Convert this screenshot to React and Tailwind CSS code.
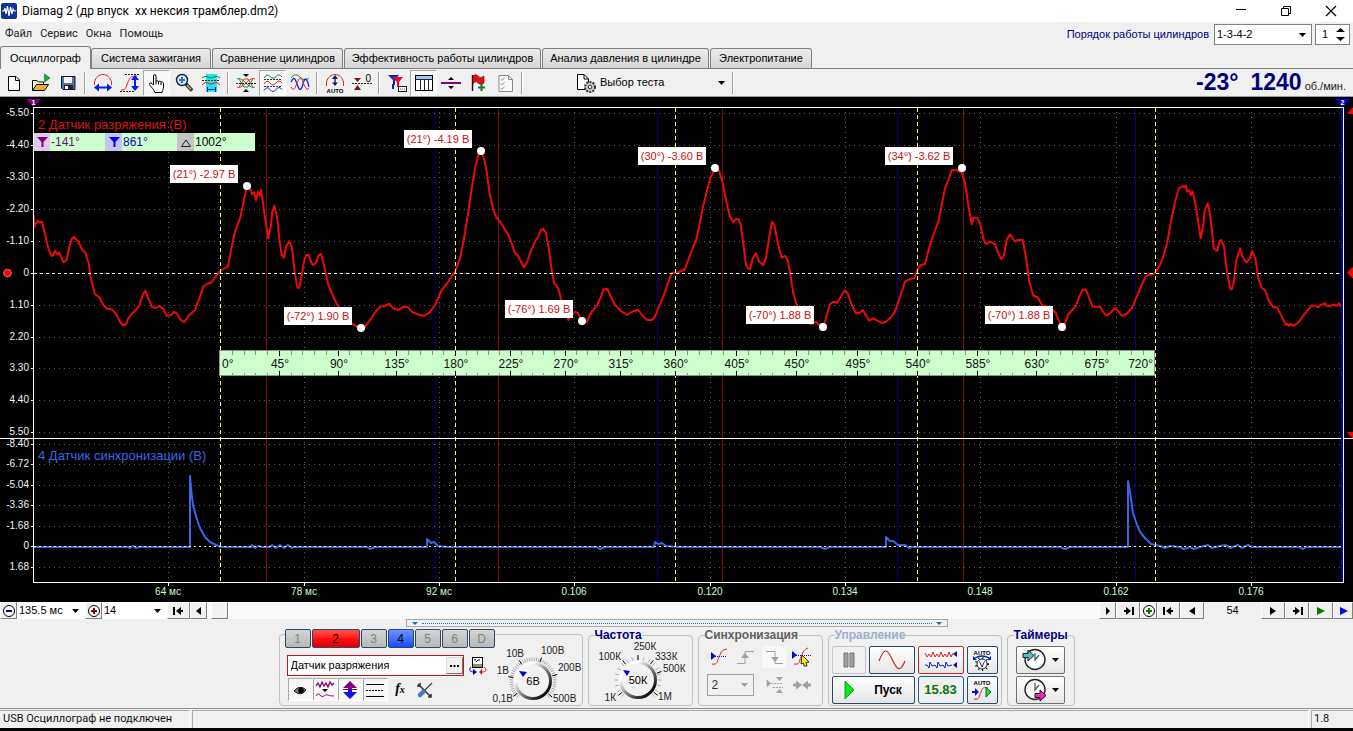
import React from "react";

const FONT = "font-['Liberation_Sans',Arial,sans-serif]";
const UI_FONT = "font-['Roboto','Noto_Sans',sans-serif]";

/* ---------- chart data: pixel traces of both channels ---------- */
const seg = (x0, y0, pts) => pts.map(([x, y]) => [x0 + x / 3, y0 + y / 3]);

const VACUUM = [
  ...seg(0, 95, [[101,360],[103,395],[112,378],[120,382],[126,380],[134,415],[145,460],[155,483],[160,480],[165,468],[172,478],[178,472],[190,502],[200,495],[208,455],[215,432],[222,426],[235,440],[248,467],[255,470],[266,505],[272,550],[285,598],[298,607],[310,630],[322,642],[336,643],[350,660],[360,680],[368,691],[378,688],[385,670],[397,655],[405,648],[418,632],[428,600],[436,587],[445,610],[457,637],[470,638],[478,632],[490,642],[500,662],[512,660],[522,651],[530,655],[540,672],[552,682],[565,663],[585,645],[600,605],[610,575],[622,566],[635,562],[655,533],[665,525],[684,514],[695,455],[705,410],[720,370],[730,325],[738,285],[742,278],[752,285],[756,298],[762,292],[768,316],[774,290],[780,302],[783,285],[790,330],[796,375],[805,430],[813,390],[817,350],[823,332],[832,370],[838,430],[845,480],[852,488],[858,455],[868,438],[876,460],[884,530],[892,578],[898,578],[905,540],[912,500],[918,480],[926,480],[935,505],[940,510],[950,500],[956,480],[963,477],[972,510],[985,570],[1000,605],[1015,635]]),
  ...seg(350, 95, [[-20,660],[-5,680],[8,687],[20,695],[33,700],[45,695],[60,675],[80,645],[90,635],[105,633],[118,626],[130,640],[145,645],[158,637],[172,635],[185,650],[200,657],[222,663],[238,653],[255,630],[275,585],[290,567],[316,528],[330,490],[342,430],[352,370],[362,300],[375,220],[385,180],[393,170],[402,190],[410,230],[418,290],[430,345],[438,365],[446,375],[460,395],[475,420],[487,450],[495,475],[503,480],[515,505],[522,517],[532,500],[540,475],[552,445],[565,425],[573,405],[580,402],[588,415],[596,460],[605,525],[613,565],[625,580],[633,612],[642,640],[655,675],[665,660],[675,650],[685,655],[696,678],[710,680],[725,650],[740,632],[753,605],[760,583],[772,582],[780,600],[795,630],[815,650],[832,660],[850,648],[865,645],[880,665],[892,675],[905,675],[915,665],[925,640],[940,605],[955,560],[965,535],[985,532],[1005,522],[1020,480],[1040,430],[1049,385]]),
  ...seg(700, 95, [[2,370],[8,340],[20,290],[32,245],[45,225],[58,228],[68,265],[80,325],[90,365],[100,382],[108,372],[116,373],[122,390],[130,445],[138,510],[144,519],[150,522],[158,490],[168,475],[178,500],[190,510],[198,488],[207,430],[216,380],[223,390],[235,450],[245,488],[255,483],[263,495],[272,545],[280,595],[292,635],[310,665],[332,688],[348,680],[358,690],[368,697],[378,670],[390,628],[400,620],[412,623],[425,600],[435,586],[443,595],[455,630],[468,655],[480,653],[488,645],[508,677],[520,670],[545,684],[558,680],[570,670],[585,650],[600,605],[615,560],[630,552],[642,550],[655,520],[662,510],[675,507],[690,450],[700,420],[715,380],[725,330],[735,280],[748,248],[755,225],[770,226],[785,232],[795,265],[805,330],[815,388],[820,368],[832,368],[840,385],[850,430],[857,447],[862,445],[870,440],[885,447],[893,470],[904,492],[912,480],[920,435],[930,418],[945,440],[955,435],[968,435],[978,490],[988,560],[1000,602],[1013,607],[1026,630]]),
  ...seg(1000, 95, [[155,640],[168,655],[178,680],[186,692],[195,685],[205,658],[228,633],[240,600],[250,583],[258,585],[268,610],[278,635],[300,635],[310,650],[318,662],[330,655],[344,640],[352,645],[365,662],[380,656],[395,640],[410,605],[425,570],[438,542],[462,538],[480,510],[490,485],[502,440],[512,385],[525,320],[537,280],[547,273],[553,278],[558,272],[562,290],[568,286],[572,300],[578,290],[585,320],[593,370],[602,430],[610,390],[614,345],[623,325],[628,345],[635,400],[641,460],[652,468],[658,440],[663,435],[672,455],[680,525],[690,580],[695,583],[702,560],[708,500],[720,460],[730,490],[740,502],[750,490],[756,468],[766,490],[775,550],[785,578],[795,585],[808,620],[820,637],[832,637],[845,665],[858,690],[863,686],[868,693],[873,686],[878,692],[885,690],[897,680],[915,655],[935,632],[945,632],[955,637],[962,630],[975,625],[980,632],[990,634],[1000,628],[1010,632],[1018,625],[1025,640]]),
];

const SYNC = [
  [34,547],[128,547],[130,548],[133,546],[136,548],[139,547],[190,547],[190,476],[191.5,493],[193,505],[196.5,518],[200,528],[205,537],[210,542],[217,545.5],[222,547],
  [251,547],[252,545],[255,548],[258,546],[262,547],[270,547],[272,545],[276,548],[280,545],[284,548],[288,545],[292,548],[293,547],
  [367,547],[370,549],[375,547],[427,547],[427,539],[431,543],[434,542],[438,546],[446,547],[597,547],[600,549],[605,547],[654,547],[655,542],[658,544],[662,543],[666,546],[680,547],[821,547],[825,549],[829,547],
  [886,547],[886,537],[890,541],[893,541],[898,545],[905,545],[909,548],[912,547],[1060,547],[1065,549],[1070,547],[1128,547],[1128,481],[1130,492],[1133,513],[1136,522],[1140,532],[1145,538],[1151,544],[1160,546],[1165,548],[1170,546],[1180,547],[1184,549],[1190,547],[1194,549],[1200,547],[1208,545],[1212,548],[1220,546],[1226,545],[1230,548],[1238,545],[1242,548],[1248,545],[1252,547],[1299,547],[1303,549],[1306,547],[1342,547],
];

const toPoints = (a) => a.map(([x, y]) => `${x.toFixed(1)},${y.toFixed(1)}`).join(" ");

const Y_TOP = [["-5.50",113],["-4.40",145],["-3.30",177],["-2.20",209],["-1.10",241],["0",273],["1.10",305],["2.20",337],["3.30",368],["4.40",400],["5.50",432]];
const Y_BOTTOM = [["-8.40",444],["-6.72",464],["-5.04",485],["-3.36",505],["-1.68",526],["0",546],["1.68",567]];
const X_AXIS = [["64 мс",168],["78 мс",304],["92 мс",439],["0.106",574],["0.120",710],["0.134",845],["0.148",980],["0.162",1116],["0.176",1251]];
const STROKES = [220, 455, 675, 917, 1155];
const MARKS = [
  ["(21°) -2.97 В",170,165,247,186],["(21°) -4.19 В",404,130,481,151],["(30°) -3.60 В",638,147,715,168],["(34°) -3.62 В",885,147,962,168],
  ["(-72°) 1.90 В",284,307,361,328],["(-76°) 1.69 В",505,300,582,321],["(-70°) 1.88 В",746,306,823,327],["(-70°) 1.88 В",985,306,1062,327],
];

const degTicks = [];
for (let i = 0; i <= 80; i++) {
  const s = Math.min(3, Math.floor(i / 20));
  const x = Math.round(STROKES[s] + ((STROKES[s + 1] - STROKES[s]) * (i - s * 20)) / 20);
  degTicks.push({ x, major: i % 5 === 0, deg: i * 9 });
}

function Chart() {
  return (
    <svg viewBox="0 97 1353 505" className={`block w-full bg-black ${FONT}`} role="img" aria-label="Осциллограмма">
      <g shapeRendering="crispEdges">
        <g stroke="#5c5c5c" strokeDasharray="1 4">
          {[...Y_TOP, ...Y_BOTTOM].map(([l, y]) => <line key={l + y} x1="39" x2="1342" y1={y + 0.5} y2={y + 0.5} />)}
          {X_AXIS.map(([l, x]) => <line key={l} x1={x + 0.5} x2={x + 0.5} y1="112" y2="582" />)}
        </g>
        {[435, 657, 897, 1135].map((x) => <line key={x} x1={x + 0.5} x2={x + 0.5} y1="108" y2="582" stroke="#000078" />)}
        {[266, 498, 722, 963].map((x) => <line key={x} x1={x + 0.5} x2={x + 0.5} y1="108" y2="582" stroke="#780f0f" />)}
      </g>
      <polyline points={toPoints(VACUUM)} fill="none" stroke="#ee0808" strokeWidth="2" strokeLinejoin="round" />
      <polyline points={toPoints(SYNC)} fill="none" stroke="#3a67e6" strokeWidth="2" strokeLinejoin="round" />
      <g shapeRendering="crispEdges">
        <line x1="34" x2="1342" y1="273.5" y2="273.5" stroke="#fff" strokeDasharray="3 3" />
        <line x1="34" x2="1342" y1="546.5" y2="546.5" stroke="#fff" strokeDasharray="2 3" />
        {STROKES.map((x) => <line key={x} x1={x + 0.5} x2={x + 0.5} y1="108" y2="582" stroke="#ffff55" strokeDasharray="4 3" />)}
        <path d="M34 107.5H1343M0 438.5H1353M33 582.5H1343" stroke="#fff" />
        <path d="M33.5 107V583M1343.5 107V583" stroke="#fff" />
        <path d="M1342 108V582" stroke="#0000b0" strokeWidth="2" />
        {[...Y_TOP, ...Y_BOTTOM].map(([l, y]) => <line key={l + y} x1="31" x2="34" y1={y + 0.5} y2={y + 0.5} stroke="#fff" />)}
        {X_AXIS.map(([l, x]) => <line key={l} x1={x + 0.5} x2={x + 0.5} y1="583" y2="586" stroke="#fff" />)}
      </g>
      <g fill="#f4f4f4" fontSize="10" textAnchor="end">
        {[...Y_TOP, ...Y_BOTTOM].map(([l, y]) => <text key={l + y} x="29" y={y + 3}>{l}</text>)}
      </g>
      <g fill="#ccffcc" fontSize="10" textAnchor="middle">
        {X_AXIS.map(([l, x]) => <text key={l} x={x} y="595">{l}</text>)}
      </g>
      <text x="38" y="129" fontSize="13" fill="#d81414">2 Датчик разряжения (В)</text>
      <text x="38" y="460" fontSize="13" fill="#3a67e6">4 Датчик синхронизации (В)</text>

      {/* cursor read-out */}
      <rect x="34" y="133" width="221" height="18" fill="#ccffcc" />
      <rect x="34" y="133" width="16" height="18" fill="#e2c8e8" />
      <rect x="105" y="133" width="17" height="18" fill="#c4c4fa" />
      <rect x="177" y="133" width="17" height="18" fill="#c4c4c4" />
      <path d="M37 137H48L43.5 142V147H41.5V142Z" fill="#800080" />
      <path d="M109 137H120L115.500 142V147H113.500V142Z" fill="#0000f0" />
      <path d="M181.500 146.500L186 140L190.500 146.500Z" fill="none" stroke="#222" />
      <g fontSize="12">
        <text x="51" y="146" fill="#6a1070">-141°</text>
        <text x="123" y="146" fill="#0808b8">861°</text>
        <text x="195" y="146" fill="#000">1002°</text>
      </g>

      {/* peak markers */}
      {MARKS.map(([t, x, y, cx, cy]) => (
        <g key={t + x}>
          <rect x={x} y={y} width="68" height="18" fill="#fff" />
          <text x={x + 34} y={y + 13} fontSize="11" fill="#c81010" textAnchor="middle">{t}</text>
          <circle cx={cx} cy={cy} r="4" fill="#fff" />
        </g>
      ))}

      {/* crankshaft degree ruler */}
      <rect x="219.500" y="350.500" width="935" height="25" fill="#ccffcc" stroke="#8a948a" shapeRendering="crispEdges" />
      <g shapeRendering="crispEdges">
        {degTicks.filter((t) => t.deg > 0 && t.deg < 720).map((t) => (
          <path key={t.deg} d={t.major ? `M${t.x + 0.5} 351v5M${t.x + 0.5} 371v5` : `M${t.x + 0.5} 351v4M${t.x + 0.5} 373v2`} stroke={t.major ? "#000" : "#77a077"} />
        ))}
      </g>
      <g fontSize="12" fill="#101010">
        {degTicks.filter((t) => t.major).map((t) => (
          <text
            key={t.deg}
            x={t.deg === 0 ? 222 : t.deg === 720 ? 1153 : t.x + 1}
            y="368"
            textAnchor={t.deg === 0 ? "start" : t.deg === 720 ? "end" : "middle"}
          >
            {t.deg}°
          </text>
        ))}
      </g>

      {/* cursor handles and channel level pointers */}
      <path d="M26 99H41L33.500 107Z" fill="#800080" />
      <path d="M1335 99H1350L1342.500 107Z" fill="#0000e0" />
      <text x="33.500" y="105" fontSize="7" fontWeight="bold" fill="#fff" textAnchor="middle">1</text>
      <text x="1342.500" y="105" fontSize="7" fontWeight="bold" fill="#fff" textAnchor="middle">2</text>
      <circle cx="7.500" cy="273" r="3.800" fill="#f00" stroke="#f88" strokeWidth="0.8" />
      <path d="M1347 114L1352 108L1353 108V114ZM1347 272.500L1352 267.500H1353V278H1352ZM1347 432H1353V438H1352Z" fill="#f00" />
    </svg>
  );
}

/* ---------- small drawing helpers ---------- */
function Ico({ children, w = 20, h = 20 }) {
  return <svg width={w} height={h} viewBox={`0 0 ${w} ${h}`} fill="none" aria-hidden="true">{children}</svg>;
}
function Down() {
  return <Ico w={7} h={4}><path d="M0 0H7L3.500 4Z" fill="#000" /></Ico>;
}

const I = {
  file: <Ico><path d="M4.500 3.500H12L15.500 7V17.500H4.500Z" fill="#fff" stroke="#000" /><path d="M11.500 3.500V7.500H15.500" stroke="#000" /></Ico>,
  open: <Ico><path d="M1.500 17.500V7.500H6L7.500 9H12.500V12" fill="#ffffc8" stroke="#000" /><path d="M1.500 17.500L5.500 11.500H17.500L13.500 17.500Z" fill="#e8b428" stroke="#000" /><path d="M13.500 1V9L19 5Z" fill="#10b020" stroke="#064" strokeWidth=".6" /></Ico>,
  save: <Ico><path d="M3.500 3.500H17V16.500H5L3.500 15Z" fill="#5070b8" stroke="#111" /><rect x="6" y="4" width="8" height="6" fill="#f4f4f4" /><rect x="6" y="12" width="9" height="4.500" fill="#222" /><rect x="7" y="13" width="3" height="3" fill="#fff" /></Ico>,
  spanX: <Ico><path d="M1.500 12V9C3 4 6 1.500 10 1.500S17 4 18.500 9V12" stroke="#e02020" /><path d="M4 14.500H16" stroke="#0020f0" strokeWidth="2" /><path d="M1 14.500L6 10.500V18.500ZM19 14.500L14 10.500V18.500Z" fill="#0020f0" /></Ico>,
  spanY: <Ico><path d="M5 1.500H19M0 18.500H14" stroke="#222" strokeDasharray="2 1" /><path d="M1 17C7 17 6 13 8 9S10 3 17 3" stroke="#e02020" /><path d="M15 5V16" stroke="#0020f0" strokeWidth="2" /><path d="M15 2L11 7H19ZM15 18L11 13H19Z" fill="#0020f0" /></Ico>,
  hand: <Ico><path d="M6.500 12V3C6.500 1.200 9 1.200 9 3V8.500C9 7.300 11.500 7.300 11.500 9C11.500 7.800 14 7.800 14 9.600C14 8.600 16.500 8.800 16.500 10.500V14C16.500 16 15.500 17 15 19.500H8C7 16.500 4.500 14.500 2.500 11.500C2 10 3.800 9.400 5 10.500Z" fill="#fff" stroke="#000" /><path d="M11.500 9V11.500M14 10V12M9 8.500V11.500" stroke="#000" /></Ico>,
  zoom: <Ico><circle cx="8" cy="7" r="5.500" fill="#dceaff" stroke="#123" strokeWidth="1.400" /><path d="M8 4V10M5 7H11" stroke="#2870d8" strokeWidth="2" /><path d="M12 11L18 17.500" stroke="#222" strokeWidth="3.400" /><path d="M13 12L17 16.500" stroke="#d8b080" strokeWidth="1.400" /></Ico>,
  area: <Ico><rect x="5" y="1" width="11" height="18" fill="#20e8f0" /><path d="M1 5Q4 2 7 4T13 4T19 5" stroke="#108030" /><path d="M1 7.500H19" stroke="#222" strokeDasharray="2 1" /><path d="M1 12Q4 8 7 10T13 10T19 12" stroke="#e02020" /><path d="M6 16.500H15M6.500 14V19M14.500 14V19" stroke="#0020c0" /></Ico>,
  cross: <Ico><path d="M1 6Q4 4 10 10T19 14" stroke="#109030" /><path d="M1 14Q4 16 10 10T19 6" stroke="#e03030" /><path d="M3 14L8 6H12L17 14" stroke="#e03030" /><path d="M3 6L8 14H12L17 6" stroke="#109030" /><path d="M0 10.500H20" stroke="#222" strokeDasharray="2 1" /><path d="M7 1H13L10 4ZM7 19H13L10 16Z" fill="#000" /></Ico>,
  waves3: <Ico><path d="M1 5Q4 0 7 3.500T13 3.500T19 4" stroke="#108030" /><path d="M1 6.500H19M1 13.500H19" stroke="#333" strokeDasharray="2 1" /><path d="M1 11Q4 6 7 10T13 10T19 10" stroke="#e02020" /><path d="M1 17.500Q4 12.500 7 16.500T13 16.500T19 16.500" stroke="#1020e0" /></Ico>,
  waves2: <Ico><path d="M1 5Q5 -1 10 4T19 5" stroke="#109030" /><path d="M1 9C4 3 5 5 7 11S11 19 13 11S17 5 19 14" stroke="#1020e0" strokeWidth="1.300" /><path d="M1 14C4 19 5 15 7 10S11 3 13 9S17 18 19 15" stroke="#e02020" /></Ico>,
  autoX: <Ico><path d="M1.500 13V9C3 4 6 1.500 10 1.500S17 4 18.500 9V13" stroke="#e02020" /><path d="M10 4V11" stroke="#102060" strokeWidth="1.400" /><path d="M7 6L10 2L13 6ZM7 9.500L10 13L13 9.500Z" fill="#102060" /><text x="10" y="19.500" textAnchor="middle" fontSize="6" fontWeight="bold" fill="#000">AUTO</text></Ico>,
  zero: <Ico><path d="M0 10.500H20" stroke="#222" strokeDasharray="2 1" /><path d="M2 5H9L5.500 9ZM2 17H9L5.500 12Z" fill="#801010" /><text x="13.500" y="9" fontSize="10" fill="#000">0</text></Ico>,
  filter: <Ico><path d="M1 2H12L8 7V12H6V7Z" fill="#1020d0" /><path d="M5 4H16L12 9V14H10V9Z" fill="#e01020" /><path d="M6 11V16" stroke="#1020d0" strokeWidth="2" /><rect x="11.500" y="13.500" width="8" height="5" fill="#fff" stroke="#222" /><path d="M13 16H18" stroke="#44a" strokeDasharray="1 1" /></Ico>,
  table: <Ico><rect x="1.500" y="2.500" width="17" height="15" fill="#fff" stroke="#000" /><rect x="2" y="3" width="16" height="3" fill="#9fc8f0" /><path d="M1 6.500H19M6.500 6V17M10.500 6V17M14.500 6V17" stroke="#223" /></Ico>,
  split: <Ico><path d="M0 10H20" stroke="#800080" strokeWidth="2" /><path d="M7 7H13L10 4ZM7 13H13L10 16Z" fill="#000" /></Ico>,
  flag: <Ico><path d="M4.500 2V18" stroke="#111" strokeWidth="1.400" /><path d="M5 3Q8 0 10 3T16 3V10Q13 13 10 10T5 11Z" fill="#e01018" stroke="#700" strokeWidth=".6" /><path d="M13.500 11V18M10 14.500H17" stroke="#108020" strokeWidth="2" /></Ico>,
  list: <Ico><path d="M4 2.500H13.500L17.500 6.500V18.500H4Z" fill="#f8f8f8" stroke="#888" /><path d="M13.500 2.500V6.500H17.500" stroke="#888" /><path d="M6 6L7 7.500L9.500 4.500M6 10.500L7 12L9.500 9M6 15L7 16.500L9.500 13.500" stroke="#999" /></Ico>,
  test: <Ico w={22}><path d="M2.500 1.500H9L13.500 6V16.500H2.500Z" fill="#fff" stroke="#000" /><path d="M9 1.500V6H13.500" stroke="#000" /><circle cx="15" cy="14" r="5" fill="#c8c8c0" stroke="#333" strokeWidth="2" strokeDasharray="2 1.200" /><circle cx="15" cy="14" r="1.800" fill="#fff" stroke="#333" /></Ico>,
};

/* ---------- header ---------- */
function TitleBar() {
  return (
    <header className={`flex h-[22px] items-center bg-white ${UI_FONT}`}>
      <svg width="16" height="16" viewBox="0 0 16 16" className="ml-px" aria-hidden="true">
        <rect width="16" height="16" rx="2" fill="#10309c" />
        <path d="M1 8H3L4 5L5 11L6.500 3L8 13L9.500 4L11 11L12 6L13 8H15" fill="none" stroke="#fff" strokeWidth="1.200" />
      </svg>
      <h1 className="ml-[5px] whitespace-pre text-[12px] leading-4 text-black">Diamag 2 (др впуск  хх нексия трамблер.dm2)</h1>
      <div className="ml-auto flex">
        <button aria-label="Свернуть" className="flex h-[22px] w-[45px] items-center justify-center"><Ico w={12} h={12}><path d="M1 4.500H11" stroke="#000" /></Ico></button>
        <button aria-label="Свернуть в окно" className="flex h-[22px] w-[45px] items-center justify-center"><Ico w={12} h={12}><path d="M1.500 3.500H8.500V10.500H1.500ZM3.500 3.500V1.500H10.500V8.500H8.500" stroke="#000" /></Ico></button>
        <button aria-label="Закрыть" className="flex h-[22px] w-[45px] items-center justify-center"><Ico w={12} h={12}><path d="M1 1L11 11M11 1L1 11" stroke="#000" strokeWidth="1.200" /></Ico></button>
      </div>
    </header>
  );
}

function MenuRow() {
  return (
    <div className="flex h-6 items-center">
      <nav className={`flex gap-2 pl-[5px] text-[11px] text-[#222] ${UI_FONT}`}>
        {["Файл", "Сервис", "Окна", "Помощь"].map((t) => <button key={t}>{t}</button>)}
      </nav>
      <label htmlFor="order" className="ml-auto mr-[5px] text-[11px] text-[#000080]">Порядок работы цилиндров</label>
      <div className="relative mr-[3px]">
        <select id="order" className="block h-[21px] w-[98px] appearance-none border border-[#828282] bg-white pl-[2px] text-[11px]"><option>1-3-4-2</option></select>
        <span className="pointer-events-none absolute right-[6px] top-[9px]"><Down /></span>
      </div>
      <div className="mr-[3px] flex h-[21px] w-[35px] items-center border border-[#828282] bg-white">
        <input aria-label="Цилиндр" defaultValue="1" className="w-[20px] bg-transparent pl-[6px] text-[11px]" />
        <svg width="9" height="15" viewBox="0 0 9 15" aria-hidden="true"><path d="M0 5L4.500 1L9 5ZM0 10L4.500 14L9 10Z" fill="#000" /></svg>
      </div>
    </div>
  );
}

function Tabs() {
  const rest = [["Система зажигания", "w-[120px]"], ["Сравнение цилиндров", "w-[131px]"], ["Эффективность работы цилиндров", "w-[197px]"], ["Анализ давления в цилиндре", "w-[167px]"], ["Электропитание", "w-[102px]"]];
  return (
    <div role="tablist" className="flex h-[23px] items-end border-b border-[#808080] text-[11px]">
      <button role="tab" aria-selected="true" className="-mb-px h-[23px] w-[91px] rounded-t-[3px] border border-b-0 border-[#808080] bg-[#f0f0f0]">Осциллограф</button>
      <div className="flex gap-px">
        {rest.map(([t, w]) => (
          <button role="tab" aria-selected="false" key={t} className={`h-5 whitespace-nowrap rounded-t-[3px] border border-b-0 border-[#808080] bg-gradient-to-b from-[#ececec] to-[#d6d6d6] ${w}`}>{t}</button>
        ))}
      </div>
    </div>
  );
}

const Sep = () => <span className="mx-[3px] h-[22px] w-[2px] border-l border-[#a0a0a0] border-r border-r-white" />;

function Tool({ id, label, on }) {
  return (
    <button aria-label={label} aria-pressed={!!on} className={`flex h-[26px] w-[27px] items-center justify-center border ${on ? "border-[#a8a8a8] border-b-white border-r-white bg-[#f8f8f8]" : "border-transparent"}`}>
      {I[id]}
    </button>
  );
}

function Toolbar() {
  return (
    <div className="flex h-[28px] items-center border-b border-[#a0a0a0]">
      <Tool id="file" label="Новый" /><Tool id="open" label="Открыть" /><Tool id="save" label="Сохранить" />
      <Sep />
      <Tool id="spanX" label="Растянуть по горизонтали" /><Tool id="spanY" label="Растянуть по вертикали" /><Tool id="hand" label="Рука" on /><Tool id="zoom" label="Увеличить" /><Tool id="area" label="Область" />
      <Sep />
      <Tool id="cross" label="Совместить" /><Tool id="waves3" label="Разделить" on /><Tool id="waves2" label="Наложить" />
      <Sep />
      <Tool id="autoX" label="Авто" /><Tool id="zero" label="Ноль" />
      <Sep />
      <Tool id="filter" label="Фильтр" /><Tool id="table" label="Таблица" on /><Tool id="split" label="Линия" /><Tool id="flag" label="Флаг" /><Tool id="list" label="Список" />
      <Sep />
      <button className="ml-[49px] flex w-[154px] items-center text-[11px]">
        {I.test}<span className="ml-[3px]">Выбор теста</span><span className="ml-auto mr-1"><Down /></span>
      </button>
      <Sep />
      <div className="ml-auto mr-[7px] flex items-baseline font-bold text-[#000080]">
        <span className="text-[23px] leading-6">-23°</span>
        <span className="ml-3 text-[23px] leading-6">1240</span>
        <span className="ml-[3px] text-[11px] font-normal text-[#222]">об./мин.</span>
      </div>
    </div>
  );
}

/* ---------- navigation strip under the chart ---------- */
const RAISED = "flex h-[17px] shrink-0 items-center justify-center border border-b-[#808080] border-l-white border-r-[#808080] border-t-white bg-[#f0f0f0]";

function Nav({ w, label, d, fill = "#000" }) {
  return <button aria-label={label} className={`${RAISED} ${w}`}><Ico w={12} h={10}><path d={d} fill={fill} /></Ico></button>;
}
function Circle({ plus, color }) {
  return <Ico w={14} h={14}><circle cx="7" cy="7" r="5.500" fill="#fff" stroke="#000" strokeWidth="1" /><path d={plus ? "M4 7H10M7 4V10" : "M4 7H10"} stroke={color} strokeWidth="2" /></Ico>;
}
const FIRST = "M0 1H2V9H0ZM8 1V9L3 5ZM8 4H10V6H8Z";
const LAST = "M10 1H12V9H10ZM4 1V9L9 5ZM2 4H4V6H2Z";

function NavStrip() {
  return (
    <div className="flex h-[17px] bg-[#f9f9f9] text-[11px]">
      <button aria-label="Сжать" className={`${RAISED} w-[17px]`}><Circle color="#000080" /></button>
      <div className="relative">
        <select aria-label="Длительность" className="block h-[17px] w-[68px] appearance-none bg-white pl-[2px]"><option>135.5 мс</option></select>
        <span className="pointer-events-none absolute right-[6px] top-[7px]"><Down /></span>
      </div>
      <button aria-label="Растянуть" className={`${RAISED} w-[17px]`}><Circle plus color="#800000" /></button>
      <div className="relative">
        <select aria-label="Деление" className="block h-[17px] w-[65px] appearance-none bg-white pl-[2px]"><option>14</option></select>
        <span className="pointer-events-none absolute right-[6px] top-[7px]"><Down /></span>
      </div>
      <Nav w="w-[23px]" label="В начало" d={FIRST} />
      <Nav w="w-[17px]" label="Назад" d="M8 1V9L3 5Z" />
      <div className="flex-1 pl-1"><div className={`${RAISED} w-[17px]`} /></div>
      <Nav w="w-[17px]" label="Вперёд" d="M4 1V9L8 5Z" />
      <Nav w="w-[24px]" label="В конец" d={LAST} />
      <button aria-label="Добавить" className={`${RAISED} w-[17px]`}><Circle plus color="#007800" /></button>
      <Nav w="w-[23px]" label="Первый кадр" d={FIRST} />
      <Nav w="w-[24px]" label="Предыдущий кадр" d="M9 1V9L3 5Z" />
      <output className="w-[57px] bg-[#f0f0f0] text-center leading-[17px]">54</output>
      <Nav w="w-[24px]" label="Следующий кадр" d="M3 1V9L9 5Z" />
      <Nav w="w-[24px]" label="Последний кадр" d={LAST} />
      <Nav w="w-[24px]" label="Проиграть" d="M2 1V9L10 5Z" fill="#008000" />
      <Nav w="w-[20px]" label="Проиграть всё" d="M3 1V9L11 5Z" fill="#0000ff" />
    </div>
  );
}

/* ---------- control panel ---------- */
function Group({ title, w, color = "text-[#000080]", children }) {
  return (
    <fieldset className={`h-[77px] shrink-0 rounded-[4px] border border-[#c0c0c0] ${w}`}>
      <legend className={`ml-[6px] h-[13px] text-[12px] font-bold leading-[13px] ${color}`}>{title}</legend>
      {children}
    </fieldset>
  );
}

function Dial({ id, w, cx, cy, value, labels, pointer, ring, label }) {
  const ticks = [];
  for (let a = 135; a <= 405; a += ring) ticks.push((a * Math.PI) / 180);
  return (
    <svg width={w} height="62" viewBox={`0 0 ${w} 62`} role="img" aria-label={label} className={FONT}>
      <defs>
        <linearGradient id={id} x1="0" y1="0" x2="1" y2="1">
          <stop offset="0.25" stopColor="#fafafa" /><stop offset="0.5" stopColor="#909090" /><stop offset="0.85" stopColor="#101010" />
        </linearGradient>
      </defs>
      {ticks.map((a) => <line key={a} x1={cx + 20 * Math.cos(a)} y1={cy + 20 * Math.sin(a)} x2={cx + 23.5 * Math.cos(a)} y2={cy + 23.5 * Math.sin(a)} stroke="#a8a8a8" />)}
      <circle cx={cx} cy={cy} r="17.500" fill="#f2f2f2" stroke={`url(#${id})`} strokeWidth="3" />
      {labels.map(([t, x, y, anchor, deg]) => {
        const a = (deg * Math.PI) / 180;
        return (
          <g key={t}>
            <line x1={cx + 20 * Math.cos(a)} y1={cy + 20 * Math.sin(a)} x2={cx + 25 * Math.cos(a)} y2={cy + 25 * Math.sin(a)} stroke="#000" />
            <text x={x} y={y} fontSize="10" fill="#222" textAnchor={anchor}>{t}</text>
          </g>
        );
      })}
      <path d={pointer} fill="#0000e0" />
      <text x={cx} y={cy + 4} fontSize="11" fill="#000" textAnchor="middle">{value}</text>
    </svg>
  );
}

const CH = [["1", "w-[26px]", 0], ["2", "w-[48px]", 2], ["3", "w-[26px]", 0], ["4", "w-[26px]", 4], ["5", "w-[26px]", 0], ["6", "w-[26px]", 0], ["D", "w-[26px]", 0]];
const CH_STYLE = {
  0: "bg-gradient-to-b from-[#d4d4d4] to-[#b8b8b8] text-[#808080]",
  2: "bg-gradient-to-b from-[#ff5050] via-[#ff1010] to-[#e00000] text-black",
  4: "bg-gradient-to-b from-[#7090ff] to-[#1848ff] text-black",
};

function SmallTool({ label, on, children }) {
  return <button aria-label={label} className={`flex h-[23px] w-[25px] items-center justify-center border ${on ? "border-[#a8a8a8] border-b-white border-r-white bg-[#f8f8f8]" : "border-transparent"}`}>{children}</button>;
}

function ChannelGroup() {
  return (
    <fieldset className="h-[77px] w-[304px] shrink-0 rounded-[4px] border border-[#c0c0c0]">
      <legend className="ml-[5px] h-[11px]">
        <div className="flex gap-px">
          {CH.map(([t, w, k]) => <button key={t} className={`h-[19px] rounded-[2px] border border-[#28486c] text-[12px] leading-4 ${w} ${CH_STYLE[k]}`}>{t}</button>)}
        </div>
      </legend>
      <div className="flex pt-[6px]">
        <div className="flex flex-col pl-[7px] pt-[9px]">
          <div className="flex items-center gap-[5px]">
            <div className="flex h-[21px] w-[177px] items-center border border-[#c01818] bg-white">
              <input aria-label="Название канала" defaultValue="Датчик разряжения" className="min-w-0 flex-1 pl-[3px] text-[11px]" />
              <button aria-label="Выбрать датчик" className="flex h-[17px] w-[17px] items-center justify-center border border-b-[#707070] border-l-[#ddd] border-r-[#707070] border-t-[#ddd] bg-[#f0f0f0]"><Ico w={9} h={3}><path d="M0 1H2V3H0ZM3.500 1H5.500V3H3.500ZM7 1H9V3H7Z" fill="#000" /></Ico></button>
            </div>
            <button aria-label="Повернуть"><Ico w={18} h={18}><rect x="3.500" y=".5" width="10" height="10" fill="#fff" stroke="#000" /><path d="M4 8.500H13" stroke="#7a9a7a" strokeWidth="3" /><path d="M5 3H7M9 3H11M7 5L9 3" stroke="#000" /><path d="M2 10C0 12 0 15 5 15" stroke="#0000b0" /><path d="M4 12L8 15L4 18Z" fill="#0000b0" /><path d="M15 10C18 12 18 15 13 15" stroke="#e01010" /><path d="M13 12L10 15L13 18Z" fill="#e01010" /></Ico></button>
          </div>
          <div className="mt-[2px] flex pl-px">
            <SmallTool label="Показать" on><Ico><path d="M4 11Q10 4 16 10Q11 17 4 11Z" fill="#888" stroke="#111" /><circle cx="11" cy="10.500" r="2.800" fill="#000" /></Ico></SmallTool>
            <SmallTool label="Сглаживание" on><Ico><path d="M1 6L3 3L5 7L7 2L9 6L11 3L13 7L15 2L17 5L19 3" stroke="#800080" strokeWidth="1.300" /><path d="M7 9H13L10 12Z" fill="#000" /><path d="M1 16Q3 12 5 15T9 16T13 15T19 16" stroke="#a010a0" /></Ico></SmallTool>
            <SmallTool label="Инверсия" on><Ico><path d="M10 1L17 8H12V10H8V8H3Z" fill="#800080" /><path d="M10 19L17 12H12V10H8V12H3Z" fill="#1010e0" /><path d="M3 9.500H17" stroke="#800080" /></Ico></SmallTool>
            <SmallTool label="Линии" on><Ico><path d="M1 4.500H19M1 16.500H19" stroke="#000" /><path d="M1 10.500H19" stroke="#000" strokeDasharray="2 1" /></Ico></SmallTool>
            <SmallTool label="Функция"><span className="font-['Liberation_Serif',serif] text-[14px] font-bold italic leading-4">f<span className="text-[10px]">x</span></span></SmallTool>
            <SmallTool label="Настройки"><Ico><path d="M3 4L16 17" stroke="#333" strokeWidth="1.600" /><path d="M17 3L9 11" stroke="#444" strokeWidth="1.200" /><path d="M8 12L5 15" stroke="#5078b8" strokeWidth="4.500" strokeLinecap="round" /><path d="M2 6L5 6L5 3M13 17L16 17L16 14" stroke="#333" strokeWidth="1.600" /></Ico></SmallTool>
          </div>
        </div>
        <div className="pl-[5px]">
          <Dial id="volt" label="Диапазон напряжения" w={90} cx={41} cy={35} value="6В" ring={6} pointer="M27 25L35 26L31 31Z"
            labels={[["0,1В", 21, 56, "end", 142], ["1В", 17, 28, "end", 190], ["10В", 32, 11, "end", 236], ["100В", 49, 8, "start", 290], ["200В", 66, 25, "start", 345], ["500В", 61, 56, "start", 40]]} />
        </div>
      </div>
    </fieldset>
  );
}

const BTN = "flex items-center justify-center rounded-[2px] border bg-gradient-to-b from-white to-[#e6e6e6]";

function SyncGroup() {
  const dis = "#a0a0a0";
  return (
    <Group title="Синхронизация" w="w-[125px]" color="text-[#606060]">
      <div className="flex flex-col gap-[6px] px-2 pt-1">
        <div className="flex justify-between">
          <button aria-label="Уровень" className="flex h-[22px] w-[24px] items-center justify-center"><Ico><path d="M3 17C9 18 8 14 10 10S12 3 18 2" stroke="#e02020" /><path d="M2 9.500H18" stroke="#1010c0" strokeDasharray="1 1" /><path d="M2 5V13L7 9Z" fill="#0000e0" /></Ico></button>
          <button aria-label="По фронту" disabled className="flex h-[22px] w-[24px] items-center justify-center"><Ico><path d="M1 16.500H9V4.500H18" stroke={dis} /><path d="M9 6L5 11H13Z" fill={dis} /></Ico></button>
          <button aria-label="По спаду" disabled className="flex h-[22px] w-[24px] items-center justify-center bg-[#f8f8f8]"><Ico><path d="M2 4.500H11V16.500H19" stroke={dis} /><path d="M11 15L7 10H15Z" fill={dis} /></Ico></button>
          <button aria-label="Выбор уровня" className="flex h-[22px] w-[24px] items-center justify-center"><Ico><path d="M3 17C9 18 8 14 10 10S12 3 17 1" stroke="#e02020" /><path d="M1 8.500H20" stroke="#1010c0" strokeDasharray="1 1" /><path d="M1 4V12L6 8Z" fill="#0000e0" /><path d="M11 8L18 15L15 15.500L16 19H13L12.500 16L10 17Z" fill="#ffee10" stroke="#000" strokeWidth=".8" /></Ico></button>
        </div>
        <div className="flex items-center">
          <div className="relative">
            <select aria-label="Канал синхронизации" disabled className="block h-[22px] w-[47px] appearance-none border border-[#a0a0a0] bg-[#f0f0f0] pl-1 text-[12px] text-[#333] opacity-100"><option>2</option></select>
            <span className="pointer-events-none absolute right-[6px] top-[9px]"><Ico w={7} h={4}><path d="M0 0H7L3.500 4Z" fill={dis} /></Ico></span>
          </div>
          <button aria-label="Задержка" disabled className="ml-[11px]"><Ico><path d="M3 8.500H18M8 12.500H18M2 5V12" stroke={dis} strokeDasharray="2 1" /><path d="M2 5L6 8.500L2 12ZM11 2H18L14.500 6ZM11 18H18L14.500 14Z" fill={dis} /></Ico></button>
          <button aria-label="Центр" disabled className="ml-[7px]"><Ico><path d="M1 10H5M15 10H19" stroke={dis} strokeWidth="3" /><path d="M4 5.500L10 10L4 14.500ZM16 5.500L10 10L16 14.500Z" fill={dis} /></Ico></button>
        </div>
      </div>
    </Group>
  );
}

function ControlGroup() {
  return (
    <Group title="Управление" w="w-[173px]" color="text-[#9cb0cc]">
      <div className="flex flex-col gap-[2px] px-[3px] pt-1">
        <div className="flex gap-[3px]">
          <button aria-label="Пауза" disabled className="flex h-[28px] w-[34px] items-center justify-center rounded-[2px] border border-[#c4c4c4]"><Ico w={12} h={16}><path d="M1 1H5V15H1ZM7 1H11V15H7Z" fill="#a0a0a0" stroke="#777" /></Ico></button>
          <button aria-label="Синусоида" className={`${BTN} h-[28px] w-[46px] border-[#28486c]`}><Ico w={30} h={22}><path d="M2 12C7 -1 10 -1 15 10S23 24 28 12" stroke="#d02020" strokeWidth="1.200" /></Ico></button>
          <button aria-label="Поток" className={`${BTN} h-[28px] w-[46px] border-[#c82828]`}><Ico w={34} h={22}><path d="M1 4L3 8L5 5L7 8L9 3L11 8L13 5L15 8L17 3L19 8L21 5L23 8L25 3L27 8L29 4" stroke="#d02020" /><path d="M1 16L3 16L5 19L6 13L8 17L11 16L13 19L14 13L16 17L19 16L21 19L22 13L24 17L28 16" stroke="#1020c0" /><path d="M33 2V8L29 5ZM33 13V19L29 16Z" fill="#101080" /></Ico></button>
          <button aria-label="Автодиапазон" className={`${BTN} h-[28px] w-[31px] border-[#28486c]`}><Ico w={24} h={24}><text x="12" y="7" textAnchor="middle" fontSize="6" fontWeight="bold" fill="#000">AUTO</text><path d="M5 10Q12 6 19 10" stroke="#0020c0" strokeWidth="1.400" /><path d="M3 8V12H7ZM21 8V12H17Z" fill="#0020c0" /><circle cx="12" cy="16" r="6" stroke="#000" strokeDasharray="1 3" strokeWidth="2" /><circle cx="12" cy="16" r="5" fill="#fff" stroke="#222" /><path d="M9.500 13.500L12 19L14.500 13.500" stroke="#1020a0" /></Ico></button>
        </div>
        <div className="flex gap-[3px]">
          <button className={`${BTN} h-[28px] w-[83px] border-[#28486c] text-[12px] font-bold`}><Ico w={12} h={20}><path d="M1 1V19L10 10Z" fill="#00f010" stroke="#209030" /></Ico><span className="ml-[18px]">Пуск</span></button>
          <output className="flex h-[28px] w-[46px] items-center justify-center rounded-[3px] border border-[#28588c] text-[13px] font-bold text-[#087808]">15.83</output>
          <button aria-label="Автосинхронизация" className={`${BTN} h-[28px] w-[31px] border-[#28486c]`}><Ico w={24} h={24}><text x="12" y="7" textAnchor="middle" fontSize="6" fontWeight="bold" fill="#000">AUTO</text><path d="M4 21C10 22 9 18 11 14S12 9 18 10" stroke="#d02020" /><path d="M2 14H6" stroke="#1010d0" strokeWidth="2" /><path d="M5 10V18L9 14Z" fill="#1010d0" /><path d="M16 9V19L21 14Z" fill="#20e030" stroke="#063" /></Ico></button>
        </div>
      </div>
    </Group>
  );
}

function Clock({ arrow }) {
  return (
    <Ico w={26} h={26}>
      <circle cx="13" cy="12.500" r="10" fill="#fff" stroke="#222" strokeWidth="1.400" />
      <circle cx="13" cy="12.500" r="8" stroke="#bbb" strokeDasharray="1 3.200" />
      <path d="M13 6V13L17 8" stroke="#555" strokeWidth="1.300" />
      {arrow === "in" ? <path d="M1 6.500H6V3L12 8.500L6 14V10.500H1Z" fill="#50c0b8" stroke="#123" /> : <path d="M13 16.500H18V13L24 18.500L18 24V20.500H13Z" fill="#e828c8" stroke="#301" />}
    </Ico>
  );
}

function ControlPanel() {
  return (
    <section className="border-b border-[#909090]">
      <div className="mx-auto flex h-[8px] w-[542px] items-center gap-1 border border-[#a8a8a8] px-[5px]">
        <Ico w={6} h={3}><path d="M0 0H6L3 3Z" fill="#1868b0" /></Ico>
        <div className="flex-1 border-t border-dotted border-[#2878c0]" />
        <Ico w={6} h={3}><path d="M0 0H6L3 3Z" fill="#1868b0" /></Ico>
      </div>
      <div className="flex justify-center gap-[5px] pb-[2px] pt-[2px]">
        <ChannelGroup />
        <Group title="Частота" w="w-[105px]">
          <Dial id="freq" label="Частота дискретизации" w={102} cx={49} cy={38} value="50К" ring={15} pointer="M34 28L41 29L38 34Z"
            labels={[["1К", 27, 59, "end", 142], ["100К", 32, 18, "end", 232], ["250К", 56, 8, "middle", 270], ["333К", 66, 18, "start", 308], ["500К", 74, 30, "start", 340], ["1М", 69, 58, "start", 38]]} />
        </Group>
        <SyncGroup />
        <ControlGroup />
        <Group title="Таймеры" w="w-[68px]">
          <div className="flex flex-col gap-[2px] px-2 pt-1">
            {["in", "out"].map((a) => (
              <button key={a} aria-label={a === "in" ? "Таймер запуска" : "Таймер остановки"} className={`${BTN} h-[28px] w-[49px] gap-1 border-[#707070]`}><Clock arrow={a} /><Down /></button>
            ))}
          </div>
        </Group>
      </div>
    </section>
  );
}

function StatusBar() {
  return (
    <footer className={`mt-px flex h-[18px] gap-[2px] text-[11px] leading-4 text-[#111] ${UI_FONT}`}>
      <div className="w-[190px] border-r border-t border-[#a8a8a8] border-r-white pl-[3px]">USB Осциллограф не подключен</div>
      <div className="flex-1 border-l border-r border-t border-[#a8a8a8] border-r-white" />
      <div className="w-[42px] border-l border-t border-[#a8a8a8] pl-[2px]">1.8</div>
    </footer>
  );
}

export default function App() {
  return (
    <div className={`flex min-h-screen flex-col bg-[#f0f0f0] text-black ${FONT}`}>
      <TitleBar />
      <MenuRow />
      <Tabs />
      <Toolbar />
      <Chart />
      <NavStrip />
      <ControlPanel />
      <StatusBar />
      <div className="flex-1 bg-[#050505]" />
    </div>
  );
}
